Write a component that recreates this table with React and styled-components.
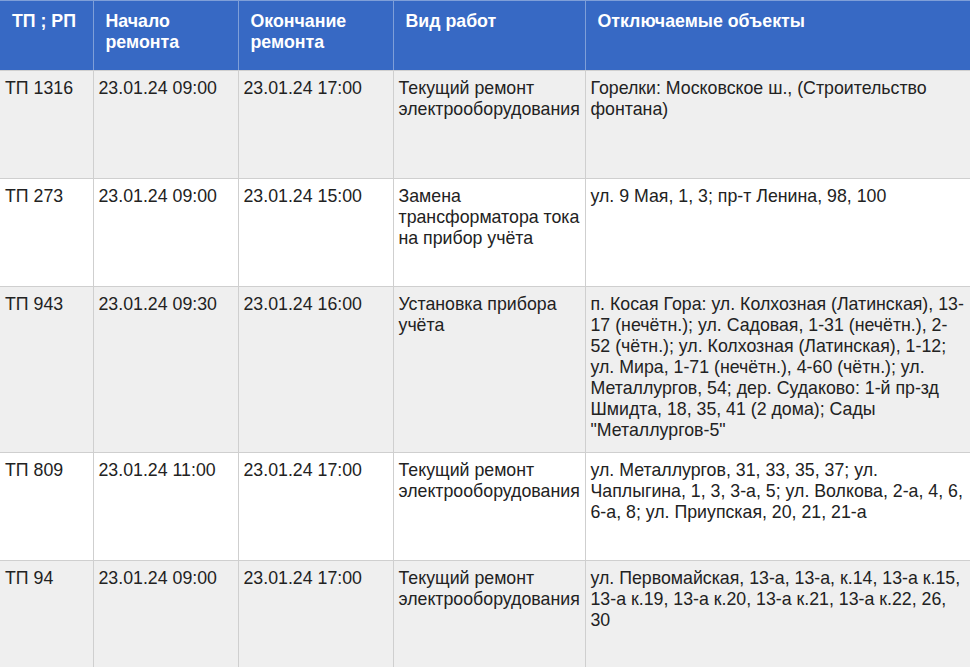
import React from 'react';
import styled, { createGlobalStyle } from 'styled-components';

const GlobalStyle = createGlobalStyle`
  html, body {
    margin: 0;
    padding: 0;
    overflow: hidden;
    background: #fff;
  }
  body {
    font-family: "Liberation Sans", Arial, sans-serif;
  }
`;

const Table = styled.table`
  width: 971px;
  border-collapse: collapse;
  table-layout: fixed;
  font-size: 17.75px;
  line-height: 21px;
  color: #222;
`;

const HeadCell = styled.th`
  height: 70px;
  box-sizing: border-box;
  padding: 10px 12px 17px;
  background: #3769c4;
  color: #fff;
  font-weight: bold;
  text-align: left;
  vertical-align: top;
  border: 1px solid #7f9fd8;
  border-bottom-color: #d0d0d0;
  &:first-child {
    border-left: none;
  }
`;

const Row = styled.tr`
  background: ${(p) => (p.$shaded ? '#efefef' : '#ffffff')};
`;

const Cell = styled.td`
  height: 108px;
  box-sizing: border-box;
  padding: 7px 5px 11px;
  vertical-align: top;
  border: 1px solid #cfcfcf;
  &:first-child {
    border-left: none;
  }
`;

const columns = [
  { title: 'ТП ; РП', width: 93 },
  { title: 'Начало ремонта', width: 145 },
  { title: 'Окончание ремонта', width: 155 },
  { title: 'Вид работ', width: 192 },
  { title: 'Отключаемые объекты', width: 386 },
];

const rows = [
  {
    tp: 'ТП 1316',
    start: '23.01.24 09:00',
    end: '23.01.24 17:00',
    work: 'Текущий ремонт электрооборудования',
    objects: 'Горелки: Московское ш., (Строительство фонтана)',
  },
  {
    tp: 'ТП 273',
    start: '23.01.24 09:00',
    end: '23.01.24 15:00',
    work: 'Замена трансформатора тока на прибор учёта',
    objects: 'ул. 9 Мая, 1, 3; пр-т Ленина, 98, 100',
  },
  {
    tp: 'ТП 943',
    start: '23.01.24 09:30',
    end: '23.01.24 16:00',
    work: 'Установка прибора учёта',
    objects:
      'п. Косая Гора: ул. Колхозная (Латинская), 13-17 (нечётн.); ул. Садовая, 1-31 (нечётн.), 2-52 (чётн.); ул. Колхозная (Латинская), 1-12; ул. Мира, 1-71 (нечётн.), 4-60 (чётн.); ул. Металлургов, 54; дер. Судаково: 1-й пр-зд Шмидта, 18, 35, 41 (2 дома); Сады "Металлургов-5"',
  },
  {
    tp: 'ТП 809',
    start: '23.01.24 11:00',
    end: '23.01.24 17:00',
    work: 'Текущий ремонт электрооборудования',
    objects:
      'ул. Металлургов, 31, 33, 35, 37; ул. Чаплыгина, 1, 3, 3-а, 5; ул. Волкова, 2-а, 4, 6, 6-а, 8; ул. Приупская, 20, 21, 21-а',
  },
  {
    tp: 'ТП 94',
    start: '23.01.24 09:00',
    end: '23.01.24 17:00',
    work: 'Текущий ремонт электрооборудования',
    objects:
      'ул. Первомайская, 13-а, 13-а, к.14, 13-а к.15, 13-а к.19, 13-а к.20, 13-а к.21, 13-а к.22, 26, 30',
  },
];

const App = () => {
  return (
    <>
      <GlobalStyle />
      <Table>
        <colgroup>
          {columns.map((c) => (
            <col key={c.title} style={{ width: c.width }} />
          ))}
        </colgroup>
        <thead>
          <tr>
            {columns.map((c) => (
              <HeadCell key={c.title}>{c.title}</HeadCell>
            ))}
          </tr>
        </thead>
        <tbody>
          {rows.map((r, i) => (
            <Row key={r.tp} $shaded={i % 2 === 0}>
              <Cell>{r.tp}</Cell>
              <Cell>{r.start}</Cell>
              <Cell>{r.end}</Cell>
              <Cell>{r.work}</Cell>
              <Cell>{r.objects}</Cell>
            </Row>
          ))}
        </tbody>
      </Table>
    </>
  );
};

export default App;
